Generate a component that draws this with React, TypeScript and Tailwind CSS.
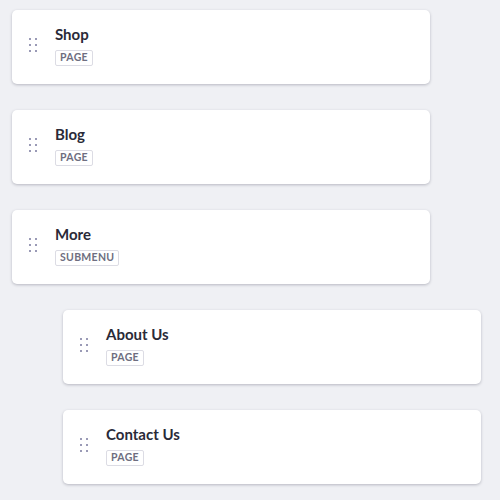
import React from 'react';

interface MenuItem {
  label: string;
  type: 'PAGE' | 'SUBMENU';
  children?: MenuItem[];
}

const items: MenuItem[] = [
  { label: 'Shop', type: 'PAGE' },
  { label: 'Blog', type: 'PAGE' },
  {
    label: 'More',
    type: 'SUBMENU',
    children: [
      { label: 'About Us', type: 'PAGE' },
      { label: 'Contact Us', type: 'PAGE' },
    ],
  },
];

function DragHandle() {
  return (
    <div className="grid grid-cols-2 gap-x-[4px] gap-y-[4px] w-[8px]">
      {[0, 1, 2, 3, 4, 5].map((i) => (
        <span key={i} className="block w-[2px] h-[2px] bg-[#9a9ab6]" />
      ))}
    </div>
  );
}

function MenuCard({ item }: { item: MenuItem }) {
  return (
    <div className="w-[418px] h-[74px] bg-white rounded-[5px] shadow-[0_1px_3px_rgba(40,40,60,0.28)] flex items-center pl-[17px]">
      <div className="mt-[-4px]">
        <DragHandle />
      </div>
      <div className="ml-[18px] flex flex-col items-start mt-[-5px]">
        <h3 className="text-[15px] leading-[20px] font-bold text-[#2a2a38]">{item.label}</h3>
        <span className="mt-[6px] h-[16px] px-[4px] flex items-center border border-[#dcdce4] rounded-[2px] text-[10.5px] font-bold tracking-[0.3px] text-[#6e6e80]">
          {item.type}
        </span>
      </div>
    </div>
  );
}

export default function App() {
  return (
    <div
      className="w-[500px] h-[500px] bg-[#eff0f4] pt-[10px] pl-[12px] flex flex-col gap-[26px]"
      style={{ fontFamily: 'Lato, "Noto Sans", sans-serif' }}
    >
      {items.map((item) => (
        <React.Fragment key={item.label}>
          <MenuCard item={item} />
          {item.children?.map((child) => (
            <div key={child.label} className="pl-[51px]">
              <MenuCard item={child} />
            </div>
          ))}
        </React.Fragment>
      ))}
    </div>
  );
}
